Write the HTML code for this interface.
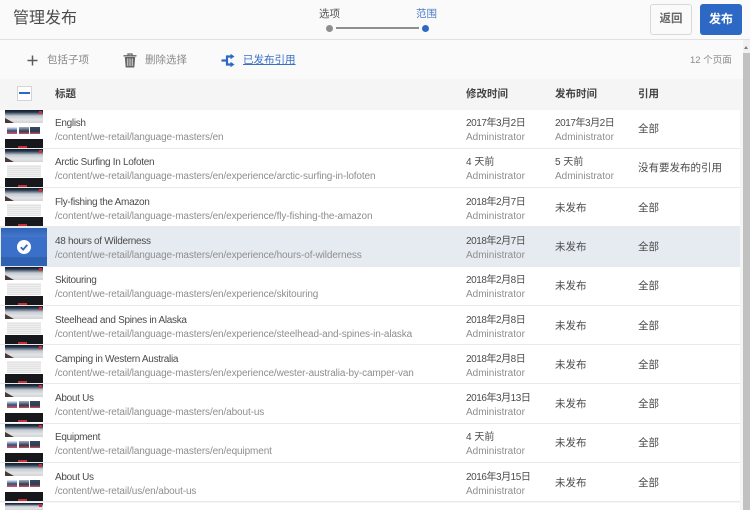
<!DOCTYPE html>
<html style="width:750px;height:510px;overflow:hidden"><head><meta charset="utf-8"><style>
html,body{margin:0;padding:0}
body{width:750px;height:510px;overflow:hidden;position:relative;background:#f5f5f5;font-family:"Liberation Sans","Noto Sans CJK SC",sans-serif;color:#4b4b4b}
div,span,a,svg{position:absolute;white-space:nowrap}
#clip{left:0;top:0;width:750px;height:510px;overflow:hidden}
#top{left:0;top:0;width:750px;height:39px;background:#fafafa;border-bottom:1px solid #e1e1e1}
#bar{left:0;top:40px;width:743px;height:39px;background:#fafafa}
#hdr{left:0;top:79px;width:743px;height:30px;background:#f5f5f5}
.h{top:87px;font-size:10.5px;font-weight:bold;line-height:14px;color:#444}
.r{left:0;width:740px;height:38px;background:#fff;border-bottom:1px solid #e9e9e9;overflow:hidden}
.sel{background:#e6ebf1}
.t{left:55px;top:7px;font-size:10px;line-height:14px;color:#4b4b4b;letter-spacing:-.3px}
.p{left:55px;top:21px;font-size:10px;line-height:14px;color:#8e8e8e;letter-spacing:-.115px}
.d{top:7px;font-size:10px;line-height:14px;color:#4b4b4b;letter-spacing:-.45px}
.a{top:21px;font-size:10px;line-height:14px;color:#8e8e8e}
.m{left:466px}.u{left:555px}
.s{top:12px;font-size:10.5px;line-height:14px;color:#4b4b4b}
.k .t,.k .d{top:8px}.k .p,.k .a{top:22px}.k .s{top:13px}
.th{left:5px;top:0;width:38px;height:38px;background:#fff;overflow:hidden}
.he{left:0;top:0;width:38px;height:13px;background:linear-gradient(180deg,#141c26 0,#23354a 16%,#6d7b8c 30%,#c6ccd3 46%,#e2e3e5 75%,#d2d4d7 100%)}
.br{left:0;top:8px;width:0;height:0;border-left:9px solid #4a3a36;border-top:5px solid transparent}
.rd{left:34px;top:1px;width:3px;height:3px;background:#c9303c}
.bk{left:0;top:29px;width:38px;height:9px;background:#17181c}
.rl{left:13px;top:36px;width:9px;height:2px;background:#c5303a}
.i1,.i2,.i3{top:17px;width:10px;height:7px}
.i1{left:2px;background:linear-gradient(180deg,#f0f2f5 0,#33507e 55%,#d8555e 100%)}
.i2{left:14px;background:linear-gradient(180deg,#a6b2c0 0,#2c3d54 60%,#d0505a 100%)}
.i3{left:25px;background:linear-gradient(180deg,#364a62 0,#2d3a50 65%,#cc555e 100%)}
.ln{left:2px;top:16px;width:34px;height:12px;background:repeating-linear-gradient(180deg,#eee 0,#eee 1px,#e3e3e3 1px,#e3e3e3 2px)}
</style></head><body>
<div id="clip">
<div id="bar"></div><div id="hdr"></div>
<div id="top"></div>
<div style="left:13px;top:8px;font-size:16px;line-height:22px;color:#4b4b4b">管理发布</div>
<div style="left:319px;top:7px;font-size:10.5px;line-height:14px;color:#555">选项</div>
<div style="left:416px;top:7px;font-size:10.5px;line-height:14px;color:#4a7cc8">范围</div>
<div style="left:326px;top:25px;width:7px;height:7px;border-radius:50%;background:#8e8e8e"></div>
<div style="left:336px;top:27px;width:83px;height:2px;background:#8e8e8e"></div>
<div style="left:422px;top:25px;width:7px;height:7px;border-radius:50%;background:#2d69c4"></div>
<div style="left:650px;top:4px;width:42px;height:31px;box-sizing:border-box;border:1px solid #d8d8d8;border-radius:3px;background:#fafafa;font-size:11.5px;font-weight:bold;line-height:29px;text-align:center;color:#666">返回</div>
<div style="left:700px;top:4px;width:42px;height:31px;border-radius:3px;background:#2d69c4;font-size:12px;font-weight:bold;line-height:31px;text-align:center;color:#fff">发布</div>

<svg style="left:26px;top:54px" width="13" height="13" viewBox="0 0 13 13"><path d="M6.500 1.500V11.500M1.500 6.500H11.500" stroke="#5c5c5c" stroke-width="1.500" fill="none"/></svg>
<div style="left:47px;top:53px;font-size:10.500px;line-height:14px;color:#8a8a8a">包括子项</div>
<svg style="left:123px;top:53px" width="14" height="15" viewBox="0 0 14 15"><path d="M0.500 2.800H13.500M5 2.500V1H9V2.500" stroke="#666" stroke-width="1.300" fill="none"/><path d="M1.800 4H12.200L11.300 14.500H2.700Z" fill="#666"/><path d="M4.800 5.500V13M7 5.500V13M9.200 5.500V13" stroke="#fafafa" stroke-width=".8"/></svg>
<div style="left:145px;top:53px;font-size:10.500px;line-height:14px;color:#8a8a8a">删除选择</div>
<svg style="left:221px;top:53px" width="15" height="15" viewBox="0 0 15 15"><path d="M0.500 7.500H6M6 3.500H10M6 11.500H10" stroke="#2d69c4" stroke-width="2.200" fill="none"/><path d="M6 2.400V12.600" stroke="#2d69c4" stroke-width="2.200"/><path d="M9.500 0.800L13.500 3.500L9.500 6.200ZM9.500 8.800L13.500 11.500L9.500 14.200Z" fill="#2d69c4"/></svg>
<div style="left:243px;top:53px;font-size:10.500px;line-height:14px;color:#3a70c4;text-decoration:underline">已发布引用</div>
<div style="left:690px;top:54px;font-size:9.500px;line-height:13px;color:#8a8a8a">12 个页面</div>

<div style="left:17px;top:86px;width:15px;height:15px;box-sizing:border-box;border:1px solid #d4d4d4;background:#fff"></div>
<div style="left:19px;top:92px;width:11px;height:2px;background:#2d69c4"></div>
<div class="h" style="left:55px">标题</div>
<div class="h" style="left:466px">修改时间</div>
<div class="h" style="left:555px">发布时间</div>
<div class="h" style="left:638px">引用</div>

<div class="r" style="top:110px"><div class="th"><div class="he"></div><div class="br"></div><div class="rd"></div><div class="i1"></div><div class="i2"></div><div class="i3"></div><div class="bk"></div><div class="rl"></div></div><div class="t">English</div><div class="p">/content/we-retail/language-masters/en</div><div class="d m">2017年3月2日</div><div class="a m">Administrator</div><div class="d u">2017年3月2日</div><div class="a u">Administrator</div><div class="s" style="left:638px">全部</div></div>

<div class="r" style="top:149px"><div class="th"><div class="he"></div><div class="br"></div><div class="rd"></div><div class="ln"></div><div class="bk"></div><div class="rl"></div></div><div class="t">Arctic Surfing In Lofoten</div><div class="p">/content/we-retail/language-masters/en/experience/arctic-surfing-in-lofoten</div><div class="d m" style="letter-spacing:0">4 天前</div><div class="a m">Administrator</div><div class="d u" style="letter-spacing:0">5 天前</div><div class="a u">Administrator</div><div class="s" style="left:638px">没有要发布的引用</div></div>

<div class="r k" style="top:188px"><div class="th"><div class="he"></div><div class="br"></div><div class="rd"></div><div class="ln"></div><div class="bk"></div><div class="rl"></div></div><div class="t">Fly-fishing the Amazon</div><div class="p">/content/we-retail/language-masters/en/experience/fly-fishing-the-amazon</div><div class="d m">2018年2月7日</div><div class="a m">Administrator</div><div class="s u">未发布</div><div class="s" style="left:638px">全部</div></div>

<div class="r sel k" style="top:227px;height:39px"><div style="left:1px;top:1px;width:46px;height:38px;background:#3a70c8"></div><div style="left:1px;top:1px;width:46px;height:9px;background:linear-gradient(180deg,#2f62b4,#4478cc)"></div><div style="left:1px;top:30px;width:46px;height:9px;background:#2f62b2"></div><div style="left:17px;top:13px;width:14px;height:14px;border-radius:50%;background:#fff"></div><svg style="left:17px;top:13px" width="14" height="14" viewBox="0 0 14 14"><path d="M3.800 7.200L6.200 9.600L10.300 4.800" stroke="#2d69c4" stroke-width="1.800" fill="none"/></svg><div class="t">48 hours of Wilderness</div><div class="p">/content/we-retail/language-masters/en/experience/hours-of-wilderness</div><div class="d m">2018年2月7日</div><div class="a m">Administrator</div><div class="s u">未发布</div><div class="s" style="left:638px">全部</div></div>

<div class="r" style="top:267px"><div class="th"><div class="he"></div><div class="br"></div><div class="rd"></div><div class="ln"></div><div class="bk"></div><div class="rl"></div></div><div class="t">Skitouring</div><div class="p">/content/we-retail/language-masters/en/experience/skitouring</div><div class="d m">2018年2月8日</div><div class="a m">Administrator</div><div class="s u">未发布</div><div class="s" style="left:638px">全部</div></div>

<div class="r k" style="top:306px"><div class="th"><div class="he"></div><div class="br"></div><div class="rd"></div><div class="ln"></div><div class="bk"></div><div class="rl"></div></div><div class="t">Steelhead and Spines in Alaska</div><div class="p">/content/we-retail/language-masters/en/experience/steelhead-and-spines-in-alaska</div><div class="d m">2018年2月8日</div><div class="a m">Administrator</div><div class="s u">未发布</div><div class="s" style="left:638px">全部</div></div>

<div class="r k" style="top:345px"><div class="th"><div class="he"></div><div class="br"></div><div class="rd"></div><div class="ln"></div><div class="bk"></div><div class="rl"></div></div><div class="t">Camping in Western Australia</div><div class="p">/content/we-retail/language-masters/en/experience/wester-australia-by-camper-van</div><div class="d m">2018年2月8日</div><div class="a m">Administrator</div><div class="s u">未发布</div><div class="s" style="left:638px">全部</div></div>

<div class="r k" style="top:384px;height:39px"><div class="th"><div class="he"></div><div class="br"></div><div class="rd"></div><div class="i1"></div><div class="i2"></div><div class="i3"></div><div class="bk"></div><div class="rl"></div></div><div class="t">About Us</div><div class="p">/content/we-retail/language-masters/en/about-us</div><div class="d m">2016年3月13日</div><div class="a m">Administrator</div><div class="s u">未发布</div><div class="s" style="left:638px">全部</div></div>

<div class="r" style="top:424px"><div class="th"><div class="he"></div><div class="br"></div><div class="rd"></div><div class="i1"></div><div class="i2"></div><div class="i3"></div><div class="bk"></div><div class="rl"></div></div><div class="t">Equipment</div><div class="p">/content/we-retail/language-masters/en/equipment</div><div class="d m" style="letter-spacing:0">4 天前</div><div class="a m">Administrator</div><div class="s u">未发布</div><div class="s" style="left:638px">全部</div></div>

<div class="r k" style="top:463px"><div class="th"><div class="he"></div><div class="br"></div><div class="rd"></div><div class="i1"></div><div class="i2"></div><div class="i3"></div><div class="bk"></div><div class="rl"></div></div><div class="t">About Us</div><div class="p">/content/we-retail/us/en/about-us</div><div class="d m">2016年3月15日</div><div class="a m">Administrator</div><div class="s u">未发布</div><div class="s" style="left:638px">全部</div></div>

<div class="r" style="top:503px;height:7px;border:0"><div class="th" style="height:7px"><div class="he" style="height:7px"></div><div class="rd"></div></div></div>

<div style="left:743px;top:40px;width:7px;height:470px;background:#f1f1f1"></div>
<div style="left:743px;top:53px;width:7px;height:457px;background:#c1c1c1"></div>
<div style="left:744px;top:46px;width:0;height:0;border-left:2.500px solid transparent;border-right:2.500px solid transparent;border-bottom:3px solid #7a7a7a"></div>
</div>
</body></html>
